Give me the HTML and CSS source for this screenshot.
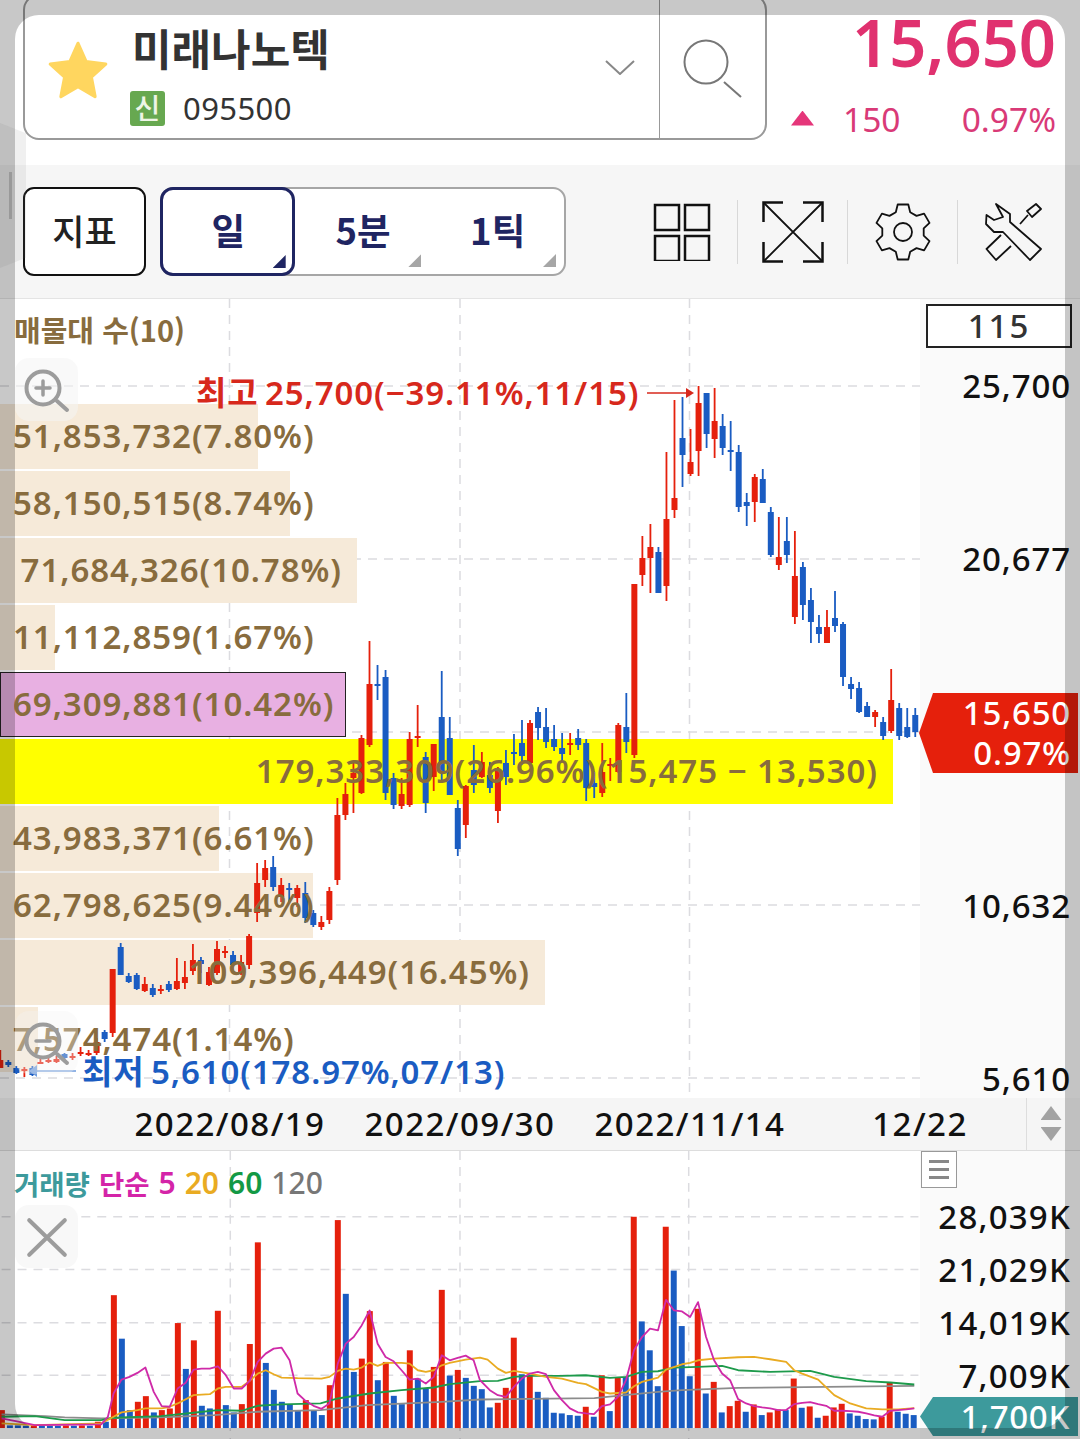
FILE: index.html
```html
<!DOCTYPE html>
<html lang="ko">
<head>
    <meta charset="UTF-8">
    <meta name="viewport" content="width=device-width, initial-scale=1.0">
    <title>미래나노텍 차트</title>
    <link rel="stylesheet" href="styles.css">
</head>
<body>
    <div class="app">
        <header class="stock-head">
            <div class="stock-box">
                <div class="stock-info">
                    <svg class="star" viewBox="0 0 60 56"><polygon points="30,3 37.5,20 56,22.500 42.500,34.500 46,53 30,43.500 14,53 17.500,34.500 4,22.500 22.500,20"/></svg>
                    <div class="stock-text">
                        <div class="stock-name">미래나노텍</div>
                        <div class="stock-code"><span class="badge">신</span>095500</div>
                    </div>
                    <svg class="chevron" viewBox="0 0 30 15"><polyline points="1,1 15,14 29,1"/></svg>
                </div>
                <button class="search-btn">
                    <svg viewBox="0 0 62 62"><circle cx="23" cy="23" r="21.500"/><line x1="41" y1="43" x2="58" y2="58"/></svg>
                </button>
            </div>
            <div class="quote">
                <div class="quote-price">15,650</div>
                <div class="quote-change">
                    <span class="up-mark"></span>
                    <span class="quote-diff">150</span>
                    <span class="quote-rate">0.97%</span>
                </div>
            </div>
        </header>

        <nav class="toolbar">
            <button class="tool-btn">지표</button>
            <div class="period-group">
                <button class="period active">일</button>
                <button class="period">5분</button>
                <button class="period">1틱</button>
            </div>
            <div class="tool-icons">
                <div class="tool-icon">
                    <svg width="58" height="58" viewBox="0 0 58 58"><rect x="2" y="2" width="24" height="25"/><rect x="32" y="2" width="24" height="25"/><rect x="2" y="33" width="24" height="25"/><rect x="32" y="33" width="24" height="25"/></svg>
                </div>
                <div class="tool-icon">
                    <svg width="62" height="62" viewBox="0 0 62 62"><path d="M1.500 21V1.500H21M41 1.500H60.500V21M1.500 41V60.500H21M41 60.500H60.500V41"/><path class="thin" d="M2 2L60 60M60 2L2 60"/></svg>
                </div>
                <div class="tool-icon">
                    <svg width="58" height="58" viewBox="0 0 58 58"><path class="thin" stroke-linejoin="round" d="M21.800 9.300L23.700 1.500H34.300L36.200 9.300L42.500 12.900L50.100 10.600L55.500 19.900L49.700 25.400V32.600L55.500 38.100L50.100 47.400L42.500 45.100L36.200 48.700L34.300 56.500H23.700L21.800 48.700L15.500 45.100L7.900 47.400L2.500 38.100L8.300 32.600V25.400L2.500 19.900L7.900 10.600L15.500 12.900Z"/><circle class="thin" cx="29" cy="29" r="9"/></svg>
                </div>
                <div class="tool-icon">
                    <svg width="58" height="60" viewBox="0 0 58 60"><path class="thin" stroke-linejoin="round" d="M12 2L26 12V20L57 47L46 58L19 30H10L2 22L2.500 13L10 18L19 15Z"/><path class="thin" stroke-linejoin="round" d="M52 2L57 7L48 15L43 9ZM44 13L36 22M17 33L2.500 47L12 58L27 44"/></svg>
                </div>
            </div>
        </nav>

        <section class="price-chart">
            <div class="plot">
                <svg class="layer layer-grid" id="price-grid"></svg>
                <svg class="layer layer-candles" id="price-candles"></svg>

                <div class="profile-title">매물대 수(10)</div>
                <div class="map-btn zoom-in">
                    <svg viewBox="0 0 63 63"><circle cx="28" cy="30" r="16.500"/><line x1="42" y1="43" x2="52" y2="52"/><path class="mark" d="M21 30H35M28 23V37"/></svg>
                </div>

                <div class="extreme high-label">최고 25,700(−39.11%,11/15)</div>
                <div class="extreme low-label">최저 5,610(178.97%,07/13)</div>

                <div class="profile">
                    <div class="profile-row" style="--w:258px"><span class="profile-fill"></span><span class="profile-label">51,853,732(7.80%)</span></div>
                    <div class="profile-row" style="--w:290px"><span class="profile-fill"></span><span class="profile-label">58,150,515(8.74%)</span></div>
                    <div class="profile-row" style="--w:357px"><span class="profile-fill"></span><span class="profile-label">71,684,326(10.78%)</span></div>
                    <div class="profile-row" style="--w:55px"><span class="profile-fill"></span><span class="profile-label">11,112,859(1.67%)</span></div>
                    <div class="profile-row is-current" style="--w:346px"><span class="profile-fill"></span><span class="profile-label">69,309,881(10.42%)</span></div>
                    <div class="profile-row is-peak" style="--w:893px"><span class="profile-fill"></span><span class="profile-label">179,333,309(26.96%)(15,475 − 13,530)</span></div>
                    <div class="profile-row" style="--w:219px"><span class="profile-fill"></span><span class="profile-label">43,983,371(6.61%)</span></div>
                    <div class="profile-row" style="--w:313px"><span class="profile-fill"></span><span class="profile-label">62,798,625(9.44%)</span></div>
                    <div class="profile-row" style="--w:545px"><span class="profile-fill"></span><span class="profile-label">109,396,449(16.45%)</span></div>
                    <div class="profile-row" style="--w:38px"><span class="profile-fill"></span><span class="profile-label">7,574,474(1.14%)</span></div>
                </div>

                <div class="map-btn zoom-out">
                    <svg viewBox="0 0 63 63"><circle cx="28" cy="30" r="16.500"/><line x1="42" y1="43" x2="52" y2="52"/><path class="mark" d="M21 30H35"/></svg>
                </div>
            </div>
            <div class="y-axis">
                <div class="count-box">115</div>
                <div class="ticks">
                    <span>25,700</span>
                    <span>20,677</span>
                    <span></span>
                    <span>10,632</span>
                    <span>5,610</span>
                </div>
                <div class="price-tag">
                    <span>15,650</span>
                    <span>0.97%</span>
                </div>
            </div>
        </section>

        <div class="date-axis">
            <span>2022/08/19</span>
            <span>2022/09/30</span>
            <span>2022/11/14</span>
            <span>12/22</span>
            <div class="scroller"><i class="arrow-up"></i><i class="arrow-down"></i></div>
        </div>

        <section class="volume-chart">
            <div class="plot">
                <svg class="layer" id="volume-plot"></svg>
                <div class="legend">
                    <span class="c-teal">거래량</span>
                    <span class="c-pink">단순</span>
                    <span class="c-pink num">5</span>
                    <span class="c-orange num">20</span>
                    <span class="c-green num">60</span>
                    <span class="c-gray num">120</span>
                </div>
                <div class="map-btn close-btn">
                    <svg viewBox="0 0 62 62"><path d="M14 15L49 49M49 15L14 49"/></svg>
                </div>
            </div>
            <div class="y-axis">
                <div class="menu-btn"><i></i><i></i><i></i></div>
                <div class="ticks volume-ticks">
                    <span>28,039K</span>
                    <span>21,029K</span>
                    <span>14,019K</span>
                    <span>7,009K</span>
                </div>
                <div class="volume-tag">1,700K</div>
            </div>
        </section>
    </div>

    <!-- dimmed edge of the phone screen -->
    <div class="screen-frame"></div>
    <div class="edge-panel"></div>
    <div class="edge-handle"></div>

    <script src="chart.js"></script>
</body>
</html>
```

FILE: styles.css
```css
:root {
    --up-red: #e5200c;
    --down-blue: #1a5cc2;
    --brown: #886c3e;
    --pink: #e0316f;
    --navy: #1f2562;
    --num-font: "Noto Sans", "Noto Sans CJK KR", sans-serif;
    --kr-font: "Noto Sans CJK KR", "Noto Sans", sans-serif;
}

html, body {
    margin: 0;
    padding: 0;
    width: 1080px;
    height: 1439px;
    overflow: hidden;
    background: #fff;
    font-family: var(--num-font);
}

button {
    font: inherit;
    background: none;
    border: none;
    padding: 0;
    color: inherit;
}

.app {
    display: flex;
    flex-direction: column;
    height: 1439px;
}

/* head */
.stock-head {
    display: flex;
    height: 165px;
    padding-left: 23px;
    box-sizing: border-box;
    flex: none;
}

.stock-box {
    display: flex;
    box-sizing: border-box;
    width: 744px;
    height: 146px;
    margin-top: -6px;
    border: 2px solid #999;
    border-radius: 16px;
    background: #fff;
}

.stock-info {
    flex: 1;
    display: flex;
    align-items: center;
    padding: 6px 24px 0 21px;
}

.star {
    width: 64px;
    height: 60px;
    flex: none;
}

.star polygon {
    fill: #ffd65f;
    stroke: #ffd65f;
    stroke-width: 3;
    stroke-linejoin: round;
}

.stock-text {
    flex: 1;
    margin: 8px 0 0 20px;
}

.stock-name {
    font-family: var(--kr-font);
    font-size: 43px;
    font-weight: 700;
    line-height: 50px;
    color: #333;
    margin-left: 2px;
}

.stock-code {
    display: flex;
    align-items: center;
    margin-top: 18px;
    font-size: 31px;
    letter-spacing: 0.4px;
    line-height: 36px;
    color: #333;
}

.badge {
    width: 35px;
    height: 35px;
    margin-right: 18px;
    border-radius: 3px;
    background: #67a850;
    color: #eef5e6;
    font-family: var(--kr-font);
    font-size: 28px;
    font-weight: 500;
    line-height: 33px;
    text-align: center;
}

.chevron {
    width: 30px;
    height: 15px;
    flex: none;
    margin-top: -6px;
}

.chevron polyline {
    fill: none;
    stroke: #888;
    stroke-width: 2;
}

.search-btn {
    width: 106px;
    flex: none;
    border-left: 1px solid #999;
    display: flex;
    align-items: center;
    justify-content: center;
}

.search-btn svg {
    width: 62px;
    height: 62px;
    margin: 6px 0 0 2px;
}

.search-btn circle, .search-btn line {
    fill: none;
    stroke: #777;
    stroke-width: 2;
}

.quote {
    flex: 1;
    padding: 6px 24px 0 24px;
    display: flex;
    flex-direction: column;
    align-items: stretch;
}

.quote-price {
    font-size: 65px;
    font-weight: 600;
    line-height: 72px;
    text-align: right;
    color: var(--pink);
}

.quote-change {
    display: flex;
    align-items: center;
    margin-top: 19px;
    font-size: 33.500px;
    line-height: 44px;
    color: #d93a77;
}

.up-mark {
    width: 23px;
    height: 15px;
    margin-top: -2px;
    background: #e5367a;
    clip-path: polygon(50% 0, 100% 100%, 0 100%);
}

.quote-diff {
    margin-left: 29px;
}

.quote-rate {
    margin-left: auto;
}

/* toolbar */
.toolbar {
    flex: none;
    display: flex;
    align-items: center;
    height: 134px;
    box-sizing: border-box;
    padding: 0 13px 0 23px;
    background: #f6f6f6;
    border-bottom: 1px solid #e4e4e4;
}

.tool-btn {
    width: 123px;
    height: 89px;
    box-sizing: border-box;
    border: 2px solid #111;
    border-radius: 11px;
    background: #fff;
    padding-bottom: 5px;
    font-family: var(--kr-font);
    font-size: 35px;
    font-weight: 500;
    color: #222;
}

.period-group {
    display: flex;
    width: 406px;
    height: 89px;
    box-sizing: border-box;
    margin-left: 14px;
    border: 2px solid #a6a6a6;
    border-radius: 13px;
    background: #fff;
}

.period {
    position: relative;
    width: 136px;
    padding: 0 0 5px 2px;
    font-family: var(--kr-font);
    font-size: 36.500px;
    font-weight: 700;
    color: var(--navy);
}

.period::after {
    content: "";
    position: absolute;
    right: 8px;
    bottom: 7px;
    width: 13px;
    height: 13px;
    background: #a6a6a6;
    clip-path: polygon(100% 0, 100% 100%, 0 100%);
}

.period.active {
    margin: -2px 0 -2px -2px;
    width: 136px;
    border: 3px solid var(--navy);
    border-radius: 13px;
}

.period.active::after {
    background: var(--navy);
    right: 6px;
    bottom: 5px;
}

.tool-icons {
    display: flex;
    margin-left: auto;
}

.tool-icon {
    width: 110px;
    height: 64px;
    box-sizing: border-box;
    display: flex;
    align-items: center;
    justify-content: center;
    border-left: 1px solid #d8d8d8;
}

.tool-icon:first-child {
    border-left: none;
}

.tool-icon svg * {
    fill: none;
    stroke: #111;
    stroke-width: 2.500;
}

.tool-icon svg .thin {
    stroke-width: 1.800;
}

/* price panel */
.price-chart {
    flex: none;
    display: flex;
    height: 799px;
}

.plot {
    position: relative;
    width: 920px;
    flex: none;
}

.layer {
    position: absolute;
    left: 0;
    top: 0;
    width: 100%;
    height: 100%;
}

.layer-grid {
    z-index: 0;
}

.layer-candles {
    z-index: 2;
}

.profile-title {
    position: absolute;
    left: 14px;
    top: 9px;
    font-family: var(--kr-font);
    font-size: 29px;
    font-weight: 700;
    line-height: 42px;
    color: var(--brown);
    z-index: 3;
}

.map-btn {
    position: absolute;
    left: 15px;
    width: 63px;
    height: 63px;
    border-radius: 14px;
    background: rgba(244, 244, 244, 0.55);
    z-index: 4;
}

.map-btn svg {
    display: block;
    width: 100%;
    height: 100%;
}

.map-btn svg * {
    fill: none;
    stroke: #9c9c9c;
    stroke-width: 4;
    stroke-linecap: round;
}

.map-btn svg .mark {
    stroke-width: 3.500;
}

.zoom-in {
    top: 59px;
}

.zoom-out {
    top: 712px;
    background: rgba(244, 244, 244, 0.35);
}

.close-btn {
    top: 54px;
    background: #f8f8f8;
}

.close-btn svg * {
    stroke-width: 4;
}

.extreme {
    position: absolute;
    font-family: var(--num-font);
    font-size: 33px;
    font-weight: 600;
    line-height: 40px;
    letter-spacing: 0.9px;
    word-spacing: -3px;
    white-space: nowrap;
    z-index: 3;
}

.high-label {
    left: 196px;
    top: 74px;
    color: #d7281c;
}

.low-label {
    left: 82px;
    top: 753px;
    color: var(--down-blue);
}

.profile {
    display: flex;
    flex-direction: column;
    gap: 2.500px;
    padding-top: 105px;
}

.profile-row {
    position: relative;
    box-sizing: border-box;
    display: flex;
    justify-content: flex-end;
    align-items: center;
    width: max-content;
    min-width: var(--w);
    height: 64.500px;
    padding: 0 15px 0 13px;
}

.profile-fill {
    position: absolute;
    left: 0;
    top: 0;
    width: var(--w);
    height: 100%;
    box-sizing: border-box;
    background: #f6ead9;
    z-index: 1;
}

.is-current .profile-fill {
    background: #e8b0e2;
    border: 1.500px solid #222;
}

.is-peak .profile-fill {
    background: #ffff00;
}

.profile-label {
    position: relative;
    z-index: 3;
    font-size: 33px;
    font-weight: 600;
    letter-spacing: 0.95px;
    line-height: 40px;
    color: var(--brown);
    white-space: nowrap;
}

/* right axes */
.y-axis {
    position: relative;
    flex: 1;
    background: #fafafa;
    font-size: 33px;
    font-weight: 500;
    color: #111;
}

.count-box {
    box-sizing: border-box;
    width: 146px;
    height: 44px;
    margin: 5px 0 0 6px;
    border: 2px solid #222;
    background: #fff;
    text-align: center;
    line-height: 40px;
    letter-spacing: 2px;
    color: #333;
}

.ticks {
    display: flex;
    flex-direction: column;
    align-items: flex-end;
    padding-right: 9px;
    margin-top: 16px;
}

.ticks span {
    height: 173.250px;
    line-height: 44px;
    letter-spacing: 0.9px;
}

.price-tag {
    position: absolute;
    left: -1px;
    top: 394px;
    width: 159px;
    height: 80px;
    box-sizing: border-box;
    padding: 0 7px 0 0;
    display: flex;
    flex-direction: column;
    align-items: flex-end;
    justify-content: center;
    background: var(--up-red);
    clip-path: polygon(14px 0, 100% 0, 100% 100%, 14px 100%, 0 50%);
    color: #fff;
    line-height: 40px;
    letter-spacing: 0.8px;
}

.date-axis {
    position: relative;
    flex: none;
    display: flex;
    box-sizing: border-box;
    height: 53px;
    padding-left: 115px;
    background: #f5f5f5;
    border-bottom: 1px solid #ddd;
    font-size: 33px;
    font-weight: 500;
    line-height: 52px;
    letter-spacing: 1.45px;
    color: #111;
}

.date-axis span {
    width: 230px;
    text-align: center;
    white-space: nowrap;
}

.scroller {
    position: absolute;
    right: 0;
    top: 0;
    width: 54px;
    height: 100%;
    border-left: 1px solid #ddd;
    display: flex;
    flex-direction: column;
    gap: 7px;
    align-items: center;
    padding: 8px 5px 0 0;
    box-sizing: border-box;
}

.scroller i {
    width: 21px;
    height: 14px;
    background: #a2a2a2;
}

.arrow-up {
    clip-path: polygon(50% 0, 100% 100%, 0 100%);
}

.arrow-down {
    clip-path: polygon(0 0, 100% 0, 50% 100%);
}

/* volume panel */
.volume-chart {
    flex: 1;
    display: flex;
}

.legend {
    position: absolute;
    left: 14px;
    top: 12px;
    display: flex;
    gap: 9px;
    font-family: var(--kr-font);
    font-size: 27.500px;
    font-weight: 700;
    line-height: 40px;
}

.legend .num {
    font-family: var(--num-font);
    font-size: 30px;
    font-weight: 600;
}

.legend .c-gray {
    font-weight: 500;
}

.c-teal { color: #3d9a9c; }
.c-pink { color: #d424a8; }
.c-orange { color: #e9ab22; }
.c-green { color: #139945; }
.c-gray { color: #777; }

.menu-btn {
    position: absolute;
    left: 1px;
    top: 0;
    width: 36px;
    height: 37px;
    box-sizing: border-box;
    border: 1px solid #999;
    background: #fff;
    display: flex;
    flex-direction: column;
    gap: 5px;
    align-items: center;
    justify-content: center;
}

.menu-btn i {
    width: 20px;
    height: 3px;
    background: #888;
}

.volume-ticks {
    margin-top: 44px;
    padding-right: 9px;
}

.volume-ticks span {
    height: 53px;
    line-height: 44px;
    letter-spacing: 1.2px;
}

.volume-tag {
    position: absolute;
    left: 0;
    top: 246px;
    width: 158px;
    height: 39px;
    box-sizing: border-box;
    padding-right: 8px;
    background: #3d9a9c;
    clip-path: polygon(13px 0, 100% 0, 100% 100%, 13px 100%, 0 50%);
    color: #fff;
    text-align: right;
    line-height: 39px;
    letter-spacing: 0.7px;
}

/* screen edge */
.screen-frame {
    position: absolute;
    left: 15px;
    top: 15px;
    width: 1050px;
    height: 1413px;
    border-radius: 24px;
    box-shadow: 0 0 0 40px rgba(0, 0, 0, 0.215);
    z-index: 10;
    pointer-events: none;
}

.edge-panel {
    position: absolute;
    left: 0;
    top: 123px;
    width: 26px;
    height: 145px;
    background: rgba(120, 120, 120, 0.11);
    clip-path: polygon(0 0, 100% 7%, 100% 93%, 0 100%);
    z-index: 11;
}

.edge-handle {
    position: absolute;
    left: 9px;
    top: 172px;
    width: 3px;
    height: 47px;
    background: #999;
    z-index: 12;
}
```

FILE: chart.js
```js
const SVG_NS = "http://www.w3.org/2000/svg";
const RED = "#e5200c";
const BLUE = "#1a5cc2";
const GRID = "#dcdce0";

// [high, top, bottom, low, colour] in page px, one per session
const candles = [
    [1050, 1060, 1068, 1068, "r"], [1060, 1062, 1065, 1067, "b"], [1066, 1068, 1073, 1074, "b"], [1067, 1069, 1071, 1077, "r"],
    [1066, 1068, 1075, 1076, "b"], [1058, 1062, 1063, 1064, "r"], [1057, 1060, 1061, 1063, "r"], [1056, 1059, 1062, 1063, "r"],
    [1053, 1054, 1058, 1060, "b"], [1053, 1056, 1057, 1060, "r"], [1047, 1052, 1053, 1056, "r"], [1050, 1053, 1054, 1056, "r"],
    [1038, 1042, 1053, 1055, "r"], [1030, 1032, 1039, 1042, "b"], [969, 969, 1033, 1037, "r"], [943, 947, 975, 975, "b"],
    [973, 976, 982, 983, "b"], [973, 975, 989, 990, "b"], [977, 984, 991, 992, "r"], [984, 988, 995, 997, "b"],
    [985, 989, 990, 994, "r"], [981, 984, 990, 992, "b"], [958, 981, 989, 990, "r"], [961, 977, 983, 989, "r"],
    [944, 960, 971, 975, "r"], [957, 960, 964, 973, "b"], [967, 972, 985, 986, "r"], [941, 949, 973, 975, "r"],
    [946, 951, 952, 958, "r"], [951, 955, 965, 972, "b"], [955, 962, 972, 975, "r"], [934, 936, 965, 969, "r"],
    [863, 883, 913, 922, "r"], [860, 868, 880, 887, "r"], [856, 867, 887, 891, "b"], [878, 885, 897, 902, "r"],
    [883, 888, 889, 903, "b"], [885, 888, 898, 907, "r"], [882, 893, 918, 923, "b"], [910, 913, 925, 927, "b"],
    [916, 922, 927, 930, "r"], [887, 891, 920, 924, "r"], [798, 815, 880, 885, "r"], [783, 794, 815, 820, "r"],
    [763, 773, 778, 813, "r"], [735, 738, 793, 794, "r"], [641, 684, 745, 747, "r"], [665, 684, 686, 700, "b"],
    [670, 677, 793, 800, "b"], [773, 778, 805, 809, "b"], [778, 794, 806, 809, "r"], [732, 739, 805, 807, "r"],
    [705, 736, 738, 747, "r"], [752, 757, 803, 813, "b"], [744, 744, 777, 791, "r"], [671, 717, 773, 783, "b"],
    [717, 738, 795, 795, "b"], [800, 808, 849, 856, "b"], [785, 786, 825, 838, "r"], [745, 770, 785, 793, "b"],
    [752, 762, 777, 778, "r"], [762, 775, 788, 793, "b"], [767, 770, 811, 823, "r"], [750, 763, 777, 785, "b"],
    [734, 752, 754, 765, "b"], [720, 743, 756, 765, "b"], [720, 723, 763, 763, "r"], [707, 712, 728, 740, "b"],
    [708, 727, 742, 748, "b"], [725, 739, 747, 751, "b"], [733, 748, 754, 761, "b"], [733, 743, 745, 755, "r"],
    [729, 738, 745, 750, "b"], [739, 743, 788, 801, "b"], [772, 783, 787, 798, "b"], [743, 772, 793, 797, "r"],
    [758, 764, 766, 781, "r"], [723, 725, 772, 773, "r"], [693, 727, 742, 753, "b"], [584, 584, 755, 758, "r"],
    [536, 558, 575, 586, "r"], [524, 547, 558, 593, "r"], [547, 552, 593, 593, "b"], [452, 519, 586, 601, "r"],
    [400, 498, 510, 518, "r"], [397, 438, 455, 487, "b"], [429, 462, 474, 476, "r"], [386, 403, 451, 476, "r"],
    [393, 393, 434, 448, "b"], [388, 421, 439, 458, "r"], [414, 426, 448, 455, "b"], [421, 450, 452, 471, "b"],
    [445, 452, 507, 512, "b"], [493, 502, 506, 526, "b"], [474, 477, 502, 522, "r"], [469, 479, 503, 503, "b"],
    [507, 512, 555, 557, "b"], [517, 557, 565, 570, "r"], [517, 541, 555, 563, "b"], [531, 576, 617, 624, "r"],
    [562, 567, 605, 620, "b"], [588, 600, 622, 643, "b"], [615, 627, 634, 643, "b"], [610, 627, 643, 643, "r"],
    [591, 618, 626, 632, "b"], [622, 624, 677, 686, "b"], [677, 684, 689, 699, "b"], [682, 688, 712, 713, "b"],
    [702, 706, 717, 717, "b"], [710, 712, 717, 727, "r"], [717, 722, 736, 740, "b"], [669, 700, 731, 733, "r"],
    [703, 708, 736, 740, "b"], [708, 727, 737, 738, "b"], [708, 715, 732, 737, "b"]
];

// volume bars: colour and top edge, in 1/3 px from the top of the volume svg
const volumes = [
    ["r", 750], ["b", 796], ["b", 796], ["b", 797], ["r", 796], ["b", 797], ["b", 797], ["b", 797],
    ["r", 796], ["b", 797], ["r", 796], ["b", 797], ["r", 785], ["b", 785], ["r", 404], ["b", 535],
    ["b", 750], ["r", 725], ["r", 708], ["b", 757], ["r", 750], ["r", 745], ["r", 488], ["b", 626],
    ["r", 540], ["b", 737], ["b", 745], ["r", 451], ["b", 735], ["b", 757], ["r", 732], ["r", 551],
    ["r", 245], ["b", 608], ["b", 689], ["b", 725], ["b", 733], ["b", 752], ["r", 720], ["b", 752],
    ["b", 765], ["r", 675], ["r", 178], ["b", 400], ["b", 635], ["r", 595], ["r", 452], ["b", 660],
    ["r", 605], ["b", 707], ["b", 732], ["r", 570], ["b", 655], ["b", 685], ["r", 620], ["r", 388],
    ["b", 646], ["r", 629], ["b", 653], ["b", 677], ["b", 687], ["b", 742], ["r", 728], ["r", 683],
    ["r", 532], ["b", 642], ["r", 645], ["b", 695], ["b", 713], ["b", 758], ["b", 760], ["b", 765],
    ["b", 767], ["r", 740], ["b", 770], ["r", 645], ["b", 753], ["r", 652], ["b", 650], ["r", 168],
    ["b", 483], ["b", 570], ["b", 678], ["r", 198], ["b", 330], ["b", 497], ["b", 648], ["r", 445],
    ["b", 700], ["r", 665], ["b", 757], ["r", 738], ["r", 722], ["b", 755], ["r", 733], ["b", 765],
    ["r", 757], ["r", 748], ["b", 750], ["r", 655], ["b", 743], ["r", 739], ["b", 773], ["r", 767],
    ["r", 742], ["r", 731], ["b", 760], ["b", 767], ["b", 777], ["b", 778], ["r", 770], ["r", 668],
    ["b", 755], ["b", 761], ["b", 765]
];

// moving averages: left half traced at 3 units per px, right half at 2.613 wide
const left = pts => pts;
const right = pts => pts.map(([x, y]) => [1440 + x * 1.148, y]);

const ma5 = left([[0,775],[50,785],[100,795],[300,793],[320,770],[337,700],[361,658],[385,650],[409,638],[433,622],[458,695],[482,738],[506,740],[530,685],[554,668],[578,628],[602,625],[627,625],[651,618],[675,645],[699,685],[723,685],[747,662],[771,605],[795,580],[819,565],[843,562],[867,600],[891,700],[915,722],[939,737],[963,746],[987,730],[1012,610],[1036,550],[1060,530],[1084,495],[1108,450],[1132,550],[1156,590],[1180,603],[1204,630],[1228,658],[1253,655],[1277,670],[1301,650],[1325,585],[1349,600],[1373,593],[1397,586],[1421,600]])
    .concat(right([[0,660],[26,690],[47,705],[68,710],[89,680],[110,655],[131,640],[152,635],[173,642],[194,690],[215,720],[236,745],[257,757],[278,760],[299,762],[320,738],[341,733],[362,710],[383,660],[404,570],[425,530],[446,505],[467,510],[488,418],[509,450],[530,453],[551,470],[572,425],[593,530],[614,600],[635,640],[656,660],[677,717],[698,730],[719,738],[740,742],[761,745],[782,750],[803,750],[824,732],[845,728],[866,726],[887,732],[908,737],[929,752],[950,752],[971,753],[992,755],[1013,760],[1034,766],[1055,770],[1076,752],[1097,750],[1118,748],[1139,745]]));

const ma20 = left([[0,790],[100,795],[300,790],[337,770],[361,757],[409,750],[433,745],[482,745],[506,740],[530,730],[578,705],[627,702],[651,685],[675,680],[723,680],[747,662],[771,640],[795,630],[819,642],[843,652],[891,654],[963,655],[987,650],[1012,632],[1036,625],[1060,628],[1084,622],[1108,607],[1132,617],[1156,608],[1204,608],[1228,610],[1253,630],[1277,635],[1301,630],[1325,615],[1349,608],[1397,598]])
    .concat(right([[0,592],[20,598],[47,625],[68,638],[89,632],[131,640],[173,650],[215,655],[257,668],[278,672],[320,695],[341,700],[383,697],[404,678],[425,665],[467,652],[488,628],[530,612],[551,608],[572,600],[614,595],[677,591],[719,590],[761,597],[803,605],[824,630],[845,640],[887,658],[929,705],[971,730],[1013,745],[1055,748],[1097,748],[1139,744]]));

const ma60 = left([[0,770],[100,768],[190,780],[300,780],[337,773],[480,768],[578,758],[650,750],[723,752],[771,737],[843,733],[960,730],[1012,715],[1108,700],[1204,690],[1301,682],[1349,672]])
    .concat(right([[0,663],[47,662],[89,650],[131,647],[215,647],[278,645],[341,653],[383,650],[425,635],[467,633],[509,622],[572,620],[635,617],[677,630],[761,635],[866,632],[929,650],[1013,663],[1076,667],[1139,673]]));

const ma120 = left([[0,763],[130,768],[190,772],[300,775],[480,772],[640,765],[770,755],[960,750],[1100,735],[1220,730],[1325,725]])
    .concat(right([[0,718],[300,714],[467,695],[530,690],[677,683],[1139,677]]));

function candleX(i) {
    return 0.3 + 8.026 * i;
}

function el(parent, name, attrs) {
    const node = document.createElementNS(SVG_NS, name);
    for (const key in attrs) node.setAttribute(key, attrs[key]);
    parent.appendChild(node);
    return node;
}

function dashed(svg, x1, y1, x2, y2, width, dash) {
    el(svg, "line", { x1, y1, x2, y2, stroke: GRID, "stroke-width": width, "stroke-dasharray": dash });
}

function drawPrice() {
    const grid = document.getElementById("price-grid");
    const svg = document.getElementById("price-candles");
    // page y = svg y + 299
    for (const svgEl of [grid, svg]) svgEl.setAttribute("viewBox", "0 299 920 799");

    [386, 559, 732, 905, 1078].forEach(y => dashed(grid, 0, y, 920, y, 1.5, "9 7"));
    [229.5, 460, 689.5].forEach(x => dashed(grid, x, 299, x, 1098, 1.5, "9 7"));

    candles.forEach((c, i) => {
        const x = candleX(i);
        const fill = c[4] === "r" ? RED : BLUE;
        el(svg, "rect", { x: x - 0.9, y: c[0], width: 1.8, height: c[3] - c[0], fill });
        el(svg, "rect", { x: x - 3, y: c[1], width: 6, height: Math.max(c[2] - c[1], 2), fill });
    });

    // high / low pointers
    el(svg, "line", { x1: 647, y1: 393, x2: 688, y2: 393, stroke: "#d7281c", "stroke-width": 1.5 });
    el(svg, "polygon", { points: "686,388 694,393 686,398", fill: "#d7281c" });
    el(svg, "line", { x1: 76, y1: 1071, x2: 36, y2: 1071, stroke: "#6f9bdc", "stroke-width": 1.5 });
    el(svg, "polygon", { points: "37,1065 29,1071 37,1077", fill: "#6f9bdc" });
}

function drawVolume() {
    const svg = document.getElementById("volume-plot");
    // svg starts 10px under the top of the panel, drawn at 3 units per px
    svg.setAttribute("viewBox", "0 -30 2760 867");

    [168, 327, 487, 645].forEach(y => dashed(svg, 0, y, 2760, y, 4.5, "27 21"));
    [688.5, 1380, 2068.5].forEach(x => dashed(svg, x, -30, x, 837, 4.5, "27 21"));

    volumes.forEach((v, i) => {
        const x = candleX(i) * 3;
        el(svg, "rect", { x: x - 9, y: v[1], width: 18, height: 804 - v[1], fill: v[0] === "r" ? RED : BLUE });
    });

    const lines = [[ma120, "#8c8c8c"], [ma60, "#1d9a4b"], [ma20, "#e9ab22"], [ma5, "#cf2aa8"]];
    lines.forEach(([pts, stroke]) => {
        el(svg, "polyline", { points: pts.map(p => p.join(",")).join(" "), fill: "none", stroke, "stroke-width": 5.5, "stroke-linejoin": "round" });
    });
}

drawPrice();
drawVolume();
```
